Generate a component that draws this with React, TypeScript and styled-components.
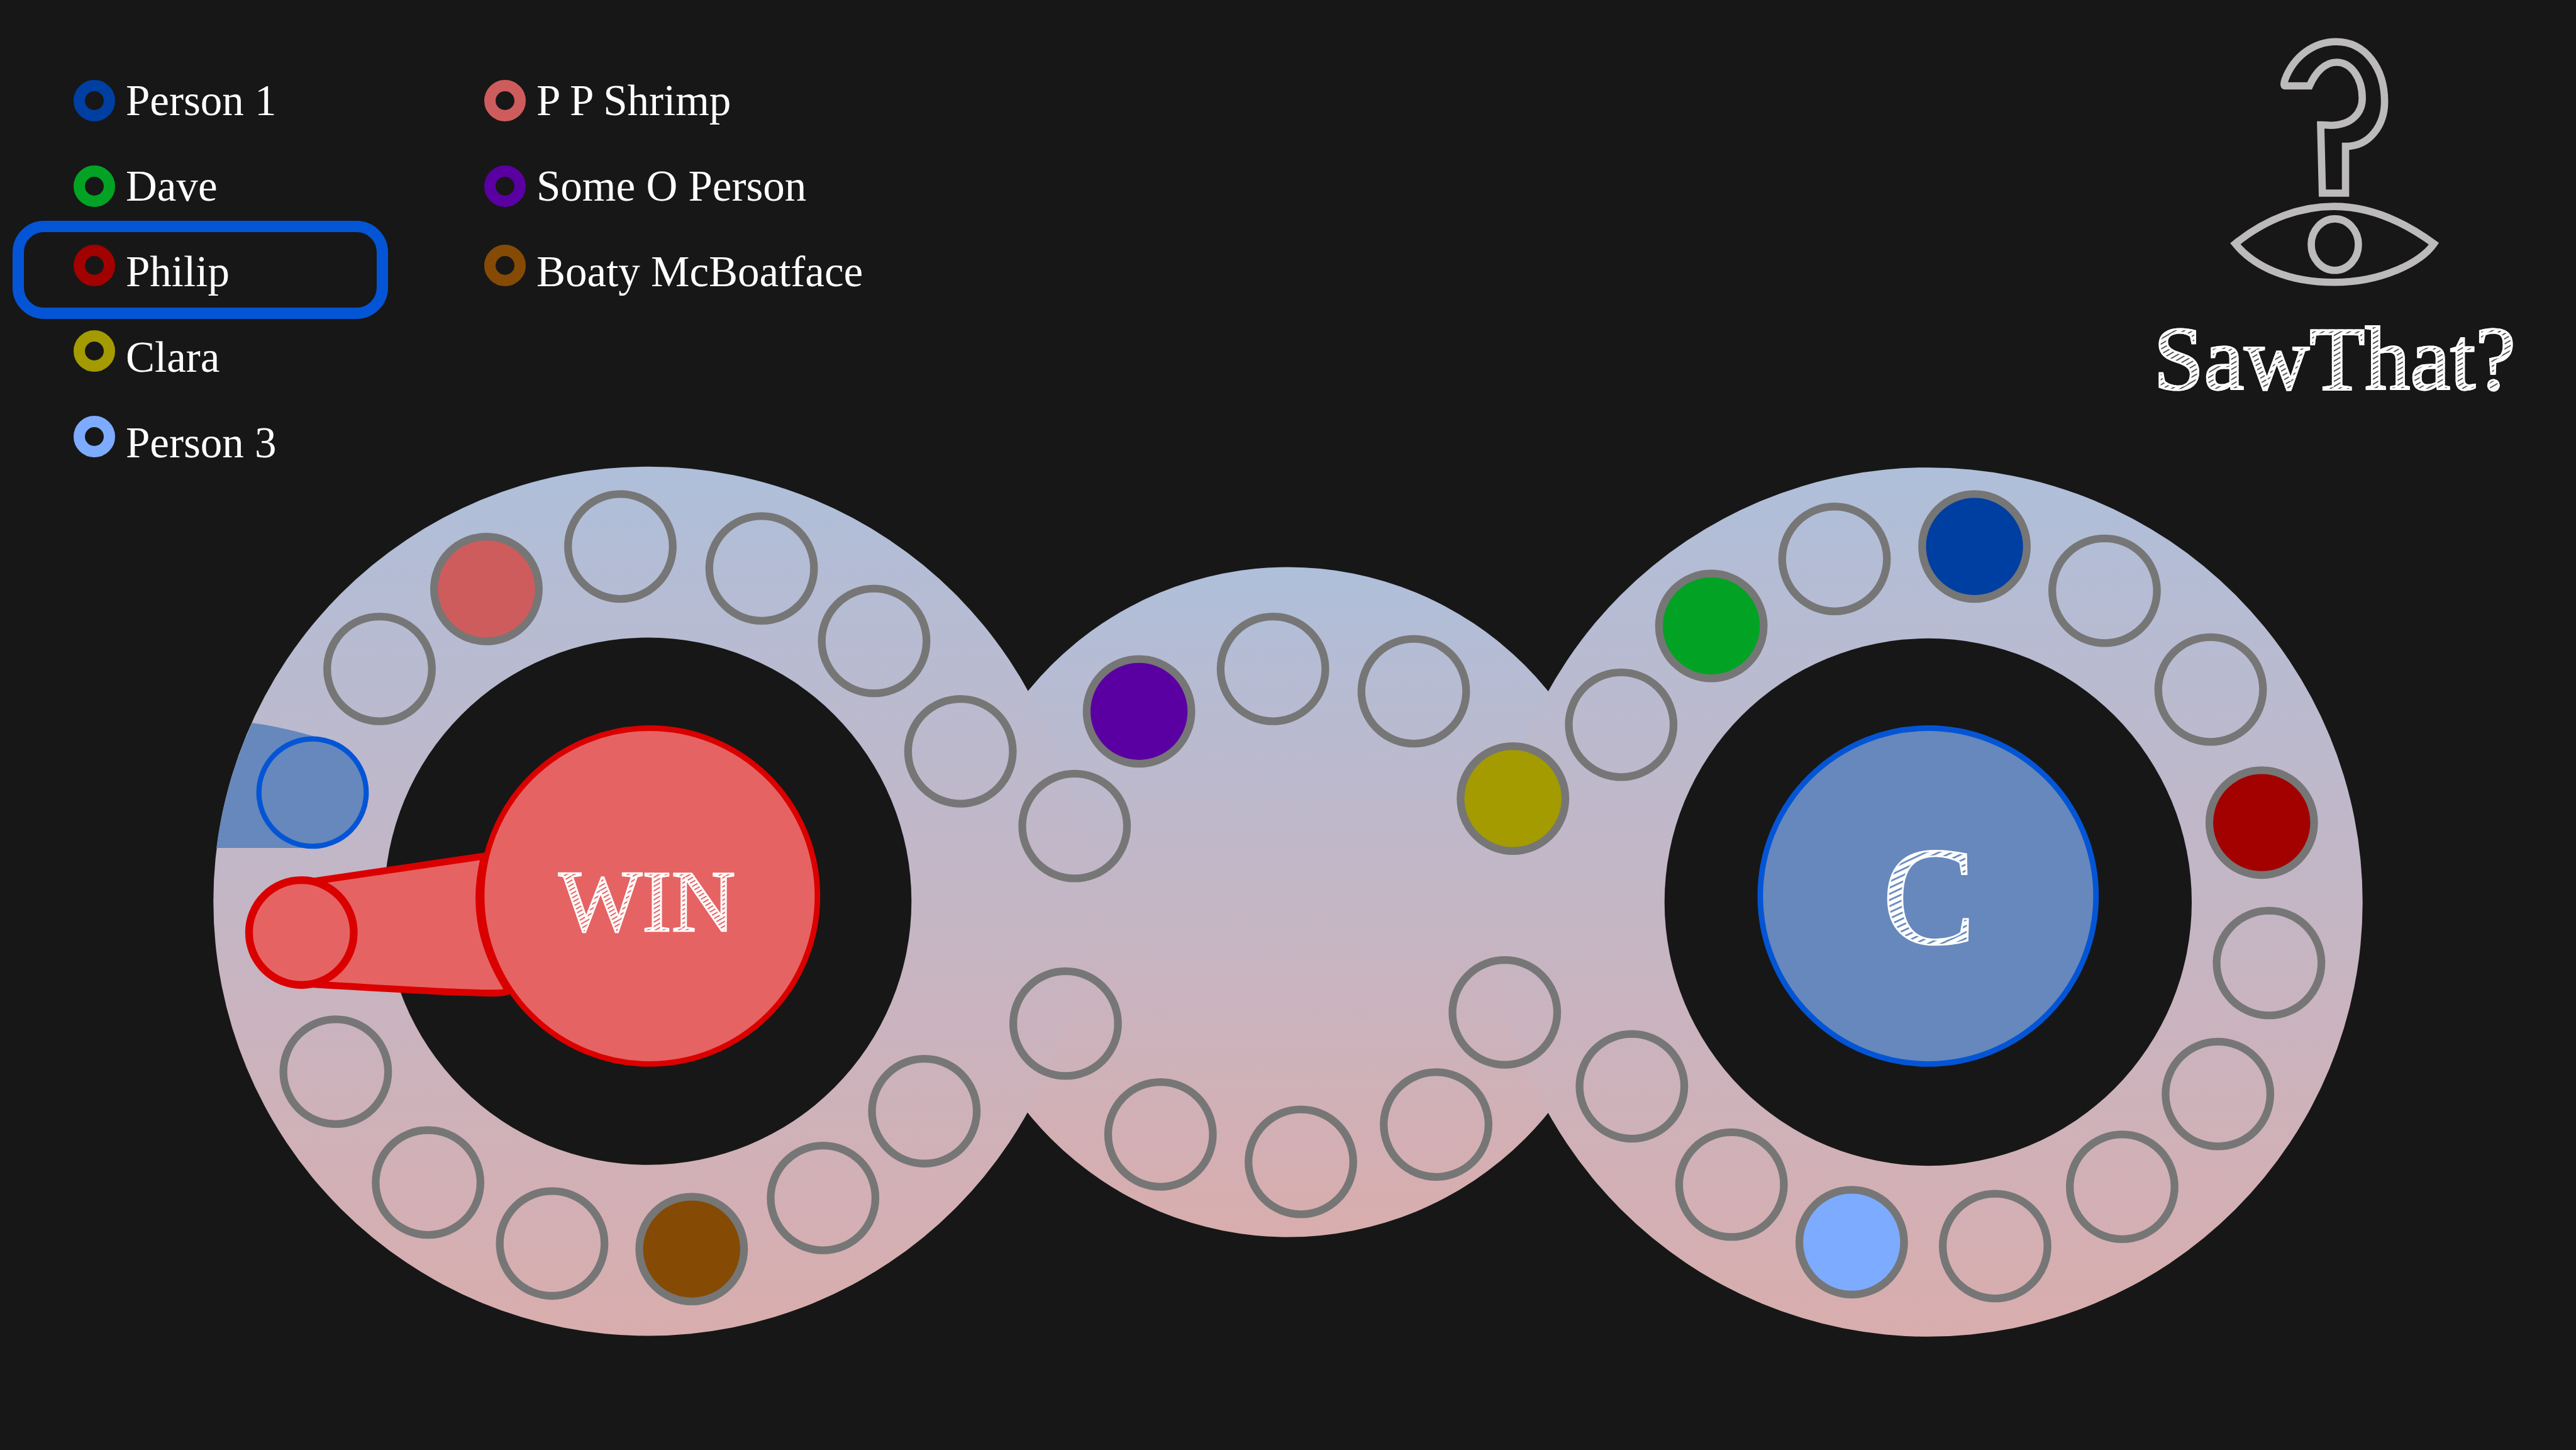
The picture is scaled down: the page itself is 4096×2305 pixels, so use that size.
import React from "react";
import styled, { createGlobalStyle } from "styled-components";

const ink = "#171717";
const serif = '"Liberation Serif", "Times New Roman", serif';

const GlobalStyle = createGlobalStyle`
  html, body { margin: 0; background: ${ink}; }
  *, *::before, *::after { box-sizing: border-box; }
`;

const Page = styled.main`
  min-height: 100vh;
  background: ${ink};
  color: #fff;
  font-family: ${serif};
`;

const Header = styled.header`
  display: flex;
  justify-content: space-between;
  align-items: flex-start;
`;

const Legend = styled.ul`
  display: grid;
  grid-auto-flow: column;
  grid-template-rows: repeat(5, 136px);
  grid-auto-columns: 597px;
  column-gap: 56px;
  margin: 0;
  padding: 92px 0 0 20px;
  list-style: none;
`;

const LegendItem = styled.li<{ $active?: boolean }>`
  display: flex;
  align-items: center;
  gap: 17px;
  font-size: 69px;
  line-height: 120px;
  white-space: nowrap;
  border: 0 solid #0455d6;
  border-radius: 50px;
  border-width: ${(p) => (p.$active ? "18px" : "0")};
  margin: ${(p) => (p.$active ? "-13px 0 -7px" : "0")};
  padding: ${(p) => (p.$active ? "6px 0 0 79px" : "0 0 0 97px")};
`;

const Ring = styled.span<{ $color: string; $raised?: boolean }>`
  flex: none;
  width: 66px;
  height: 66px;
  border: 18px solid ${(p) => p.$color};
  border-radius: 50%;
  margin-bottom: ${(p) => (p.$raised ? "20px" : "0")};
`;

const Brand = styled.div`
  display: flex;
  flex-direction: column;
  align-items: center;
  gap: 42px;
  padding: 58px 96px 0 0;
`;

const Emblem = styled.svg`
  display: block;
  width: 341px;
  height: 399px;
  fill: none;
  stroke: #bcbabb;
  stroke-width: 17;
`;

const Title = styled.h1`
  margin: 0;
  font-size: 144px;
  line-height: 144px;
  font-weight: 400;
  color: transparent;
  background: repeating-linear-gradient(150deg, #fff 0 4px, #555 5px 6px, #fff 7px);
  background-clip: text;
  -webkit-background-clip: text;
  -webkit-text-stroke: 3px #fff;
`;

const Board = styled.svg`
  display: block;
  width: 100%;
  height: auto;
  margin-top: -35px;
`;

const HubLabel = styled.text`
  font-family: ${serif};
  text-anchor: middle;
  stroke: #fff;
  stroke-width: 4px;
`;

type Player = { name: string; color: string; active?: boolean; raised?: boolean };

const players: Player[] = [
  { name: "Person 1", color: "#003fa2" },
  { name: "Dave", color: "#02a324" },
  { name: "Philip", color: "#a30000", active: true, raised: true },
  { name: "Clara", color: "#a39b00", raised: true },
  { name: "Person 3", color: "#7dabff", raised: true },
  { name: "P P Shrimp", color: "#cf5c5c" },
  { name: "Some O Person", color: "#5a00a3" },
  { name: "Boaty McBoatface", color: "#854b04", raised: true },
];

// Board spaces: centre x, centre y and, where a player stands, the player's colour.
const spaces: [number, number, string?][] = [
  [884, 1557], [1133, 1371, "#cf5c5c"], [1445, 1272], [1774, 1323], [2036, 1492], [2237, 1749],
  [2503, 1923], [2653, 1656, "#5a00a3"], [2965, 1557], [3293, 1609], [3524, 1859, "#a39b00"],
  [3776, 1687], [3986, 1457, "#02a324"], [4273, 1301], [4599, 1272, "#003fa2"], [4902, 1375],
  [5149, 1605], [5268, 1915, "#a30000"], [5285, 2242], [5166, 2547], [4943, 2763], [4647, 2901],
  [4313, 2892, "#7dabff"], [4033, 2758], [3801, 2529], [3505, 2357], [3345, 2618], [3030, 2705],
  [2703, 2641], [2482, 2383], [2153, 2587], [1917, 2789], [1611, 2908, "#854b04"], [1286, 2895],
  [997, 2753], [782, 2495],
];

const wheel = (cx: number, cy: number) =>
  `M${cx - 1012} ${cy}a1012 1012 0 1 1 2024 0a1012 1012 0 1 1 -2024 0Z` +
  `M${cx - 614} ${cy}a614 614 0 1 0 1228 0a614 614 0 1 0 -1228 0Z`;

export default function App() {
  return (
    <Page>
      <GlobalStyle />
      <Header>
        <Legend>
          {players.map((p) => (
            <LegendItem key={p.name} $active={p.active}>
              <Ring $color={p.color} $raised={p.raised} />
              {p.name}
            </LegendItem>
          ))}
        </Legend>
        <Brand>
          <Emblem viewBox="5188 85 500 585" aria-hidden="true">
            <path d="M5379 200H5322C5318 200 5320 191 5322 185C5343 130 5390 97 5441 97C5510 97 5554 160 5554 237C5554 290 5520 342 5463 341V450H5409L5405 291C5412 291 5420 292 5428 292C5478 292 5502 262 5502 229C5502 180 5475 145 5442 145C5415 145 5393 168 5379 200Z" />
            <path d="M5206 568C5280 508 5360 481 5436 481C5510 481 5590 510 5669 568C5640 610 5550 658 5436 658C5330 658 5250 622 5206 568Z" />
            <ellipse cx="5438" cy="570" rx="55" ry="60" />
          </Emblem>
          <Title>SawThat?</Title>
        </Brand>
      </Header>
      <Board viewBox="0 1079 6000 2296">
        <defs>
          <linearGradient id="dusk" x1="0" y1="0" x2="0" y2="1">
            <stop offset="0" stopColor="#afbfda" />
            <stop offset="0.5" stopColor="#c4b6c5" />
            <stop offset="1" stopColor="#d9adad" />
          </linearGradient>
          <pattern id="hatchRed" width="10" height="9" patternUnits="userSpaceOnUse" patternTransform="rotate(-30)">
            <rect width="10" height="9" fill="#fff" />
            <rect width="10" height="3" fill="#e66363" />
          </pattern>
          <pattern id="hatchBlue" width="10" height="13" patternUnits="userSpaceOnUse" patternTransform="rotate(-25)">
            <rect width="10" height="13" fill="#fff" />
            <rect width="10" height="4" fill="#6688bc" />
          </pattern>
        </defs>
        <circle cx="3000" cy="2100" r="780" fill="url(#dusk)" />
        <path d={wheel(1509, 2098)} fill="url(#dusk)" fillRule="evenodd" />
        <path d={wheel(4491, 2100)} fill="url(#dusk)" fillRule="evenodd" />

        <g fill="none" stroke="#767676" strokeWidth="18">
          {spaces.map(([x, y, color]) => (
            <circle key={`${x}-${y}`} cx={x} cy={y} r="122" fill={color ?? "none"} />
          ))}
        </g>

        <path d="M504 1974A1012 1012 0 0 1 587 1683Q650 1691 731 1714L728 1974Z" fill="#6688bc" />
        <circle cx="728" cy="1845" r="125" fill="#6688bc" stroke="#0455d6" strokeWidth="12" />

        <g fill="#e66363" stroke="#da0000">
          <path
            d="M720 2053L1128 1993C1104 2090 1110 2190 1184 2306Q1180 2312 1150 2312C1050 2312 900 2301 720 2291Z"
            strokeWidth="16"
          />
          <circle cx="702" cy="2171" r="122" strokeWidth="18" />
          <circle cx="1513" cy="2086" r="391" strokeWidth="13" />
        </g>
        <circle cx="4491" cy="2086" r="391" fill="#6688bc" stroke="#0455d6" strokeWidth="13" />

        <HubLabel x="1507" y="2167" fontSize="206" fill="url(#hatchRed)">WIN</HubLabel>
        <HubLabel x="4493" y="2196" fontSize="326" fill="url(#hatchBlue)">C</HubLabel>
      </Board>
    </Page>
  );
}
